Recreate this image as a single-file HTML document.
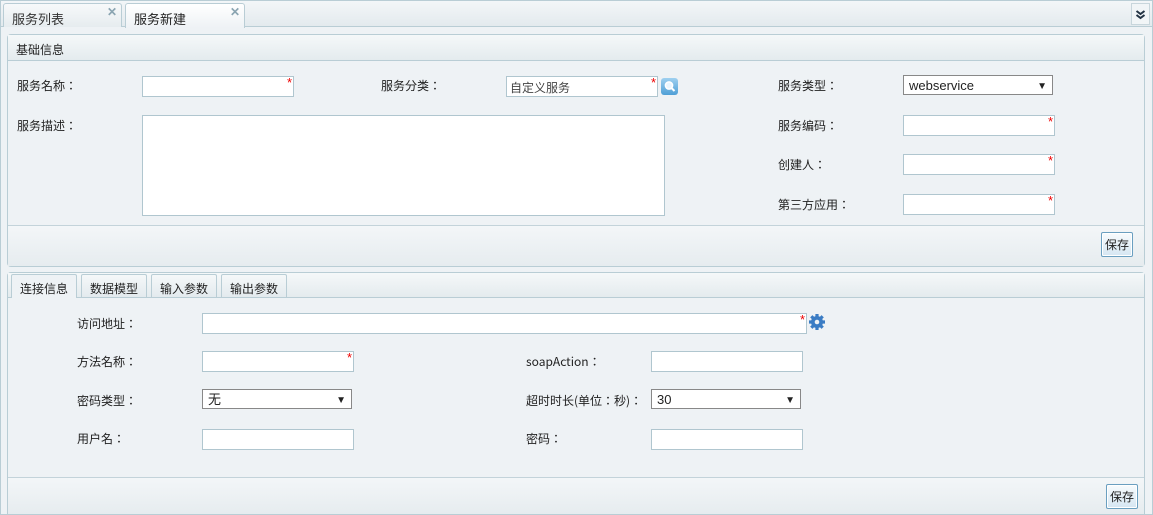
<!DOCTYPE html><html><head><meta charset="utf-8"><style>
*{box-sizing:border-box;margin:0;padding:0}
body{width:1153px;height:515px;background:#fff;font:12px "Liberation Sans","Noto Sans CJK SC",sans-serif;color:#222;position:relative;overflow:hidden}
.a{position:absolute}
.l{font-family:"Noto Sans CJK JP","Liberation Sans",sans-serif;font-size:12px;line-height:14px}
.outer{left:0;top:0;width:1153px;height:515px;border:1px solid #b9cdd5;border-top:none;background:#eef2f5}
.tabbar{left:0;top:0;width:1153px;height:27px;background:linear-gradient(#f3f6f8,#e3eaee);border:1px solid #b9cdd5}
.tab{height:24px;border:1px solid #b9cdd5;border-bottom:none;background:linear-gradient(#f7f9fa,#e6ecef);border-radius:3px 3px 0 0;padding:5px 8px;font-size:13px}
.x{color:#8aa4b1;font-weight:bold;font-size:12px}
.panel{border:1px solid #b9cdd5;border-radius:4px;background:#eef2f5}
.ph{background:linear-gradient(#f5f8f9,#e4ebee);border-bottom:1px solid #b9cdd5;height:26px;padding:6px 8px;font-size:12px}
.in{background:#fff;border:1px solid #b0c6cf;height:21px}
.st{color:#e00;font-size:13px;position:absolute;right:1px;top:-2px}
.sel{background:#fff;border:1px solid #888;height:20px;padding:2px 5px;font-size:13px;line-height:15px}
.sel:after{content:"▼";position:absolute;right:5px;top:3px;font-size:10px}
.btn{border:1px solid #6a9fc0;border-radius:2px;background:linear-gradient(#f8fbfd,#d5e6f2);box-shadow:inset 0 0 0 1px #fff;padding:3px 3px;font-size:12px}
.t2{height:24px;border:1px solid #b9cdd5;border-bottom:none;background:linear-gradient(#f5f8f9,#e3eaee);padding:5px 8px;border-radius:2px 2px 0 0}
</style></head><body>
<div class="a outer"></div>
<div class="a tabbar"></div>
<div class="a tab" style="left:3px;top:3px;width:119px;color:#333">服务列表<span class="a x" style="right:4px;top:1px">✕</span></div>
<div class="a tab" style="left:125px;top:3px;width:120px;height:25px;background:linear-gradient(#fff,#eef2f5)">服务新建<span class="a x" style="right:4px;top:1px">✕</span></div>
<div class="a" style="left:1131px;top:3px;width:19px;height:22px;border:1px solid #c8d6dc;background:#f1f5f7"><svg width="17" height="20" viewBox="0 0 17 20"><path d="M4.5 7l4 3 4-3M4.5 11l4 3 4-3" fill="none" stroke="#223344" stroke-width="2"/></svg></div>

<div class="a panel" style="left:7px;top:34px;width:1138px;height:233px">
<div class="ph">基础信息</div>
<div class="a" style="left:0;top:190px;width:1136px;border-top:1px solid #c3d3da;height:41px;background:linear-gradient(#f3f6f8,#e6ecef)"></div>
</div>
<div class="a l" style="left:17px;top:79px">服务名称：</div>
<div class="a in" style="left:142px;top:76px;width:152px"><span class="st">*</span></div>
<div class="a l" style="left:381px;top:79px">服务分类：</div>
<div class="a in" style="left:506px;top:76px;width:152px;padding:2px 3px;color:#444">自定义服务<span class="st">*</span></div>
<div class="a" style="left:661px;top:78px;width:17px;height:17px;border-radius:3px;background:linear-gradient(#9fd0f0,#4f9fd6)"><svg width="17" height="17"><circle cx="8" cy="7.5" r="3.6" fill="#eaf6ff" stroke="#fff" stroke-width="1.5"/><path d="M10.5 10l3 3" stroke="#fff" stroke-width="2"/></svg></div>
<div class="a l" style="left:778px;top:79px">服务类型：</div>
<div class="a sel" style="left:903px;top:75px;width:150px">webservice</div>
<div class="a l" style="left:17px;top:119px">服务描述：</div>
<div class="a in" style="left:142px;top:115px;width:523px;height:101px"></div>
<div class="a l" style="left:778px;top:119px">服务编码：</div>
<div class="a in" style="left:903px;top:115px;width:152px"><span class="st">*</span></div>
<div class="a l" style="left:778px;top:158px">创建人：</div>
<div class="a in" style="left:903px;top:154px;width:152px"><span class="st">*</span></div>
<div class="a l" style="left:778px;top:198px">第三方应用：</div>
<div class="a in" style="left:903px;top:194px;width:152px"><span class="st">*</span></div>
<div class="a btn" style="left:1101px;top:232px">保存</div>

<div class="a panel" style="left:7px;top:272px;width:1138px;height:242px;border-radius:4px 4px 0 0">
<div style="height:25px;background:linear-gradient(#f5f8f9,#e4ebee);border-bottom:1px solid #b9cdd5"></div>
<div class="a" style="left:0;top:204px;width:1136px;border-top:1px solid #c3d3da;height:37px;background:linear-gradient(#f3f6f8,#e6ecef)"></div>
</div>
<div class="a t2" style="left:11px;top:274px;height:24px;background:#eef2f5">连接信息</div>
<div class="a t2" style="left:81px;top:274px;height:23px">数据模型</div>
<div class="a t2" style="left:151px;top:274px;height:23px">输入参数</div>
<div class="a t2" style="left:221px;top:274px;height:23px">输出参数</div>

<div class="a l" style="left:77px;top:317px">访问地址：</div>
<div class="a in" style="left:202px;top:313px;width:605px"><span class="st">*</span></div>
<div class="a" style="left:808px;top:313px"><svg width="18" height="18" viewBox="0 0 18 18"><g fill="#3a7cc4"><circle cx="9" cy="9" r="6"/><g stroke="#3a7cc4" stroke-width="3.2"><path d="M9 1v16M1 9h16M3.3 3.3l11.4 11.4M14.7 3.3L3.3 14.7"/></g></g><circle cx="9" cy="9" r="2.3" fill="#eef2f5"/></svg></div>
<div class="a l" style="left:77px;top:355px">方法名称：</div>
<div class="a in" style="left:202px;top:351px;width:152px"><span class="st">*</span></div>
<div class="a l" style="left:526px;top:355px">soapAction：</div>
<div class="a in" style="left:651px;top:351px;width:152px"></div>
<div class="a l" style="left:77px;top:394px">密码类型：</div>
<div class="a sel" style="left:202px;top:389px;width:150px">无</div>
<div class="a l" style="left:526px;top:394px">超时时长(单位：秒)：</div>
<div class="a sel" style="left:651px;top:389px;width:150px">30</div>
<div class="a l" style="left:77px;top:432px">用户名：</div>
<div class="a in" style="left:202px;top:429px;width:152px"></div>
<div class="a l" style="left:526px;top:432px">密码：</div>
<div class="a in" style="left:651px;top:429px;width:152px"></div>
<div class="a btn" style="left:1106px;top:484px">保存</div>
</body></html>
